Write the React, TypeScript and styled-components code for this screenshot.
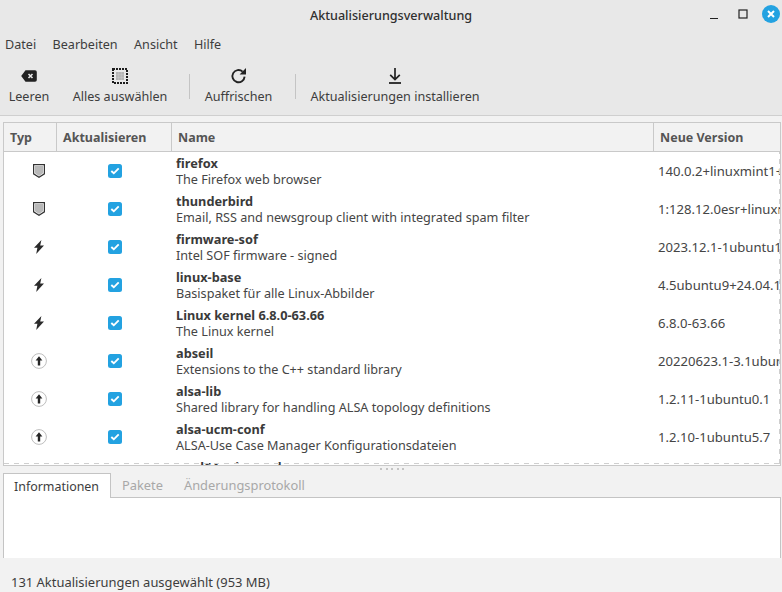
import React from "react";
import styled, { createGlobalStyle } from "styled-components";

const Global = createGlobalStyle`
  *, *::before, *::after { box-sizing: border-box; }
  html, body { margin: 0; padding: 0; background: #f2f2f2; }
  body { font-family: "Noto Sans", "Open Sans", sans-serif; font-size: 12.6px; color: #3d3d3d; }
`;

const Win = styled.div`
  width: 782px; height: 592px; display: flex; flex-direction: column; overflow: hidden; background: #f2f2f2;
`;
const Chrome = styled.div`
  height: 116px; background: #e8e8e8; border-bottom: 1px solid #cfcfcf; flex: none; display: flex; flex-direction: column;
`;
const TitleBar = styled.div`
  height: 30px; flex: none; display: flex; align-items: center; justify-content: center; position: relative;
  font-size: 12.6px; font-weight: 500; color: #303030;
`;
const WinButtons = styled.div`
  position: absolute; left: 709px; top: 5px; display: flex; align-items: center;
`;
const MinIcon = styled.svg`
  margin-right: 19px;
`;
const MaxIcon = styled.svg`
  margin-right: 14px;
`;
const MenuBar = styled.div`
  height: 28px; flex: none; display: flex; align-items: center; gap: 16.4px; padding-left: 5px; color: #3d3d3d;
`;
const Toolbar = styled.div`
  flex: 1; display: flex; align-items: flex-start; padding-top: 7px;
`;
const ToolButton = styled.div<{ $w: number }>`
  width: ${(p) => p.$w}px; flex: none; display: flex; flex-direction: column; align-items: center;
  line-height: 18px; color: #3d3d3d; white-space: nowrap;
`;
const IconSlot = styled.div`
  height: 23px; padding-bottom: 1px; display: flex; align-items: center; justify-content: center;
`;
const Sep = styled.div<{ $ml: number }>`
  width: 1px; height: 25px; background: #c4c4c4; margin: 9px 0 0 ${(p) => p.$ml}px; flex: none;
`;
const Content = styled.div`
  padding: 6px 1px 0 3px; flex: none;
`;
const TableFrame = styled.div`
  height: 344px; border: 1px solid #c9c9c9; overflow: hidden; background: #fff; position: relative;
`;
const Overshoot = styled.div`
  position: absolute; left: 0; right: 0; top: 29px; bottom: 1px; pointer-events: none;
  background-image:
    repeating-linear-gradient(90deg, #cfcfcf 0 5px, transparent 5px 10px),
    repeating-linear-gradient(0deg, #cfcfcf 0 5px, transparent 5px 10px);
  background-size: 100% 1px, 1px 100%;
  background-position: left bottom, right top;
  background-repeat: no-repeat;
`;
const HeadRow = styled.div`
  display: grid; grid-template-columns: 53px 115px 482px 1fr; height: 29px; background: #f2f2f2; border-bottom: 1px solid #c9c9c9;
`;
const HeadCell = styled.div`
  display: flex; align-items: center; padding-left: 6px; font-weight: 700; font-size: 12.5px; color: #555;
  border-right: 1px solid #c9c9c9; &:last-child { border-right: none; }
`;
const Row = styled.div`
  display: grid; grid-template-columns: 53px 115px 482px 1fr; height: 38px;
`;
const Center = styled.div`
  display: flex; align-items: center; justify-content: center;
`;
const TypeCell = styled(Center)`
  padding-left: 17px;
`;
const NameCell = styled.div`
  padding: 3px 0 0 4px; line-height: 16px; white-space: nowrap; overflow: hidden;
  b { display: block; font-weight: 700; color: #3a3a3a; font-size: 12.75px; }
  span { display: block; font-size: 12.65px; color: #454545; }
`;
const VersionCell = styled.div`
  display: flex; align-items: center; padding-left: 4px; white-space: nowrap; overflow: hidden; font-size: 13.1px; color: #454545;
`;
const Check = styled.div`
  width: 14px; height: 14px; border-radius: 2.5px; background: #23a2e1; display: flex; align-items: center; justify-content: center;
`;
const Handle = styled.div`
  height: 6px; display: flex; justify-content: center; align-items: center; gap: 3.5px; padding-bottom: 1px;
  i { width: 2px; height: 2px; background: #c4c4c4; display: block; }
`;
const TabBar = styled.div`
  height: 26px; display: flex; align-items: flex-end; border-bottom: 1px solid #c4c4c4; position: relative;
`;
const Tab = styled.div<{ $active?: boolean }>`
  height: 24px; padding: 0 ${(p) => (p.$active ? 10 : 10.5)}px; display: flex; align-items: center;
  font-size: ${(p) => (p.$active ? 12.45 : 12.85)}px;
  color: ${(p) => (p.$active ? "#3d3d3d" : "#a8a8a8")};
  background: ${(p) => (p.$active ? "#fff" : "transparent")};
  ${(p) => p.$active && "border: 1px solid #c4c4c4; border-bottom: none; margin: 0 0.5px -1px 0; width: 108px; height: 25px; z-index: 1;"}
`;
const Panel = styled.div`
  height: 60px; background: #fff; border-left: 1px solid #c4c4c4; border-right: 1px solid #c4c4c4;
`;
const Status = styled.div`
  flex: 1; display: flex; align-items: flex-end; padding: 0 0 1px 11px; font-size: 12.95px; color: #3d3d3d;
`;

const Shield = () => (
  <svg width="12" height="14" viewBox="0 0 12 14">
    <path d="M.6.6h10.8v9.2L6 13.3.6 9.8z" fill="#fff" stroke="#333" strokeWidth="1.2" />
    <path d="M1.8 1.9h8.4v7.2L6 11.9 1.8 9.1z" fill="#b8b8b8" />
  </svg>
);
const Bolt = () => (
  <svg width="10" height="14" viewBox="0 0 10 14">
    <path d="M7.4 0 0 7.8h3.4L2.2 14 10 5.4H6.2z" fill="#2a2a2a" />
  </svg>
);
const Up = () => (
  <svg width="16" height="16" viewBox="0 0 16 16">
    <circle cx="8" cy="8" r="7.4" fill="#fff" stroke="#bdbdbd" />
    <path d="M8 3.2 11.4 7.6H9.2V12.4H6.8V7.6H4.6z" fill="#262626" />
  </svg>
);
const Tick = () => (
  <svg width="10" height="8" viewBox="0 0 10 8">
    <path d="M1.3 4 3.8 6.3 8.7 1.4" fill="none" stroke="#fff" strokeWidth="1.9" />
  </svg>
);

const rows: [string, string, string, string][] = [
  ["s", "firefox", "The Firefox web browser", "140.0.2+linuxmint1+mint22"],
  ["s", "thunderbird", "Email, RSS and newsgroup client with integrated spam filter", "1:128.12.0esr+linuxmint1"],
  ["k", "firmware-sof", "Intel SOF firmware - signed", "2023.12.1-1ubuntu1.7"],
  ["k", "linux-base", "Basispaket für alle Linux-Abbilder", "4.5ubuntu9+24.04.1"],
  ["k", "Linux kernel 6.8.0-63.66", "The Linux kernel", "6.8.0-63.66"],
  ["u", "abseil", "Extensions to the C++ standard library", "20220623.1-3.1ubuntu3"],
  ["u", "alsa-lib", "Shared library for handling ALSA topology definitions", "1.2.11-1ubuntu0.1"],
  ["u", "alsa-ucm-conf", "ALSA-Use Case Manager Konfigurationsdateien", "1.2.10-1ubuntu5.7"],
  ["u", "amd64-microcode", "Processor microcode firmware", "3.20250311"],
];

export default function App() {
  return (
    <Win>
      <Global />
      <Chrome>
        <TitleBar>
          Aktualisierungsverwaltung
          <WinButtons>
            <MinIcon width="10" height="10" viewBox="0 0 10 10"><path d="M1 9.5h8" stroke="#222" strokeWidth="1" /></MinIcon>
            <MaxIcon width="10" height="10" viewBox="0 0 10 10"><rect x="1" y="1" width="8" height="8" fill="none" stroke="#222" strokeWidth="1.2" /></MaxIcon>
            <svg width="18" height="18" viewBox="0 0 18 18">
              <circle cx="9" cy="9" r="9" fill="#23a2e1" />
              <path d="M6 6l6 6M12 6l-6 6" stroke="#fff" strokeWidth="2" />
            </svg>
          </WinButtons>
        </TitleBar>
        <MenuBar>
          <span>Datei</span><span>Bearbeiten</span><span>Ansicht</span><span>Hilfe</span>
        </MenuBar>
        <Toolbar>
          <ToolButton $w={58}>
            <IconSlot>
              <svg width="16" height="12" viewBox="0 0 16 12">
                <path d="M4.5.2H14a1.8 1.8 0 0 1 1.8 1.8v8a1.8 1.8 0 0 1-1.8 1.8H4.5L.2 6z" fill="#222" />
                <path d="M7.5 4l4 4M11.5 4l-4 4" stroke="#e8e8e8" strokeWidth="1.6" />
              </svg>
            </IconSlot>
            Leeren
          </ToolButton>
          <ToolButton $w={124}>
            <IconSlot>
              <svg width="16" height="16" viewBox="0 0 16 16">
                <rect x="1" y="1" width="14" height="14" fill="none" stroke="#1c1c1c" strokeWidth="2" strokeDasharray="2 1" />
                <path d="M4 4h8v8H4z" fill="#b4b4b4" />
                <path d="M6.7 4v8M9.3 4v8M4 6.7h8M4 9.3h8" stroke="#cfcfcf" strokeWidth=".5" />
              </svg>
            </IconSlot>
            Alles auswählen
          </ToolButton>
          <Sep $ml={7} />
          <ToolButton $w={97}>
            <IconSlot>
              <svg width="17" height="16" viewBox="0 0 17 16">
                <path d="M14.6 8.6A6.1 6.1 0 1 1 12.6 3.6" fill="none" stroke="#222" strokeWidth="1.9" />
                <path d="M16 0v6.4H9.6z" fill="#222" />
              </svg>
            </IconSlot>
            Auffrischen
          </ToolButton>
          <Sep $ml={8} />
          <ToolButton $w={198}>
            <IconSlot>
              <svg width="12" height="16" viewBox="0 0 12 16">
                <path d="M6 0v11.5M1.2 6.8 6 11.6l4.8-4.8" fill="none" stroke="#222" strokeWidth="1.7" />
                <path d="M0 15h12" stroke="#222" strokeWidth="1.8" />
              </svg>
            </IconSlot>
            Aktualisierungen installieren
          </ToolButton>
        </Toolbar>
      </Chrome>
      <Content>
        <TableFrame>
          <HeadRow>
            <HeadCell>Typ</HeadCell>
            <HeadCell>Aktualisieren</HeadCell>
            <HeadCell>Name</HeadCell>
            <HeadCell>Neue Version</HeadCell>
          </HeadRow>
          {rows.map(([t, n, d, v]) => (
            <Row key={n}>
              <TypeCell>{t === "s" ? <Shield /> : t === "k" ? <Bolt /> : <Up />}</TypeCell>
              <Center><Check><Tick /></Check></Center>
              <NameCell><b>{n}</b><span>{d}</span></NameCell>
              <VersionCell>{v}</VersionCell>
            </Row>
          ))}
          <Overshoot />
        </TableFrame>
        <Handle><i /><i /><i /><i /><i /></Handle>
        <TabBar>
          <Tab $active>Informationen</Tab>
          <Tab>Pakete</Tab>
          <Tab>Änderungsprotokoll</Tab>
        </TabBar>
        <Panel />
      </Content>
      <Status>131 Aktualisierungen ausgewählt (953 MB)</Status>
    </Win>
  );
}
